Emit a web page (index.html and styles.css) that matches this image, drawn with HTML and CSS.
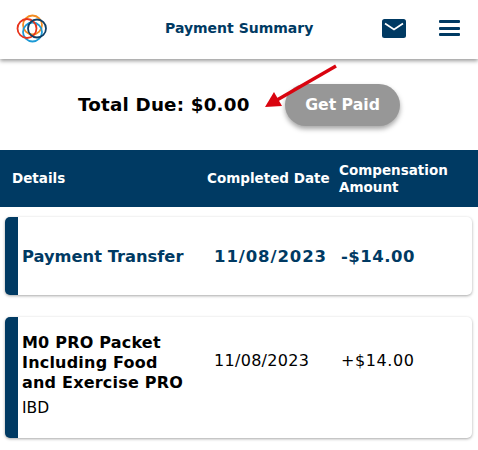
FILE: index.html
```html
<!DOCTYPE html>
<html lang="en">
<head>
<meta charset="utf-8">
<title>Payment Summary</title>
<link rel="stylesheet" href="styles.css">
</head>
<body>
<div class="page">
  <header class="topbar">
    <svg class="logo" width="36" height="32" viewBox="0 0 36 32" fill="none" stroke-width="1.8">
      <circle cx="16.5" cy="13" r="9.5" stroke="#f28c22"/>
      <circle cx="16.5" cy="20" r="9.5" stroke="#1c9ad6"/>
      <circle cx="11" cy="16.5" r="9.5" stroke="#e8341c"/>
      <circle cx="21" cy="16.5" r="9" stroke="#0f3f66"/>
    </svg>
    <h1 class="title">Payment Summary</h1>
    <svg class="mail" width="24" height="19" viewBox="0 0 24 19">
      <rect width="24" height="19" rx="2.5" fill="#003a63"/>
      <path d="M3 4.5 L12 10.5 L21 4.5" fill="none" stroke="#fff" stroke-width="1.8"/>
    </svg>
    <div class="burger"><span></span><span></span><span></span></div>
  </header>

  <section class="due">
    <div class="due-label">Total Due: $0.00</div>
    <button class="paid">Get Paid</button>
    <svg class="arrow" width="76" height="46" viewBox="0 0 76 46">
      <path d="M73 2 L14 36" stroke="#d9040f" stroke-width="3.4"/>
      <path d="M2 43 L19 42 L11 28 Z" fill="#d9040f"/>
    </svg>
  </section>

  <div class="thead">
    <div class="col-a">Details</div>
    <div class="col-b">Completed Date</div>
    <div class="col-c">Compensation Amount</div>
  </div>

  <article class="card card-one">
    <div class="col-a strong">Payment Transfer</div>
    <div class="col-b strong date">11/08/2023</div>
    <div class="col-c strong amount">-$14.00</div>
  </article>

  <article class="card card-two">
    <div class="col-a">
      <div class="name">M0 PRO Packet Including Food and Exercise PRO</div>
      <div class="sub">IBD</div>
    </div>
    <div class="col-b plain">11/08/2023</div>
    <div class="col-c plain wide">+$14.00</div>
  </article>
</div>
</body>
</html>
```
FILE: styles.css
```css
* { box-sizing: border-box; }
html, body { margin: 0; padding: 0; }
body { background: #fff; font-family: "DejaVu Sans", Verdana, sans-serif; color: #000; }
.page { width: 478px; height: 450px; overflow: hidden; }

.topbar {
  height: 59px;
  display: flex;
  align-items: center;
  padding: 0 10px 3px 16px;
  background: #fff;
  box-shadow: 0 2px 4px rgba(0,0,0,.4);
  position: relative;
}
.logo { flex: none; }
.title {
  margin: 0 0 0 113px;
  font-size: 14px;
  font-weight: 700;
  color: #003a63;
  flex: 1;
}
.mail { flex: none; margin-right: 33px; }
.burger { display: flex; flex-direction: column; gap: 3.5px; width: 21px; margin-right: 8px; }
.burger span { height: 3px; background: #003a63; border-radius: 1px; }

.due {
  height: 91px;
  display: flex;
  align-items: center;
  padding-left: 78px;
  position: relative;
}
.due-label { font-size: 18.3px; font-weight: 700; letter-spacing: .2px; width: 207px; }
.paid {
  width: 115px;
  height: 42px;
  border: 0;
  border-radius: 21px;
  background: #979797;
  color: #fff;
  font: 700 15.7px "DejaVu Sans", sans-serif;
  box-shadow: 0 3px 5px rgba(0,0,0,.35);
}
.arrow { position: absolute; left: 263px; top: 5px; }

.thead {
  height: 57px;
  background: #003a63;
  color: #fff;
  font-size: 13.5px;
  font-weight: 700;
  display: flex;
  align-items: center;
  padding-left: 12px;
  line-height: 17px;
}
.thead .col-a { width: 195px; }
.thead .col-b { width: 132px; }
.thead .col-c { width: 130px; }

.card {
  margin: 10px 6px 0 5px;
  background: #fff;
  border-left: 13px solid #003a63;
  border-radius: 5px;
  box-shadow: 0 1px 3px rgba(0,0,0,.35);
  display: flex;
  padding-left: 4px;
}
.card-one { height: 78px; align-items: center; color: #003a63; }
.card-two { height: 121px; margin-top: 22px; padding-top: 16px; align-items: flex-start; }
.card .col-a { width: 192px; }
.card .col-b { width: 127px; }
.strong { font-size: 16.3px; font-weight: 700; }
.date { font-size: 16.5px; letter-spacing: .9px; }
.amount { font-size: 16.5px; letter-spacing: .5px; }
.plain { font-size: 16px; letter-spacing: .3px; margin-top: 18px; }
.wide { letter-spacing: .6px; }
.name { font-weight: 700; font-size: 16px; line-height: 20px; letter-spacing: .2px; max-width: 168px; }
.sub { margin-top: 6px; font-size: 15.5px; }
```
